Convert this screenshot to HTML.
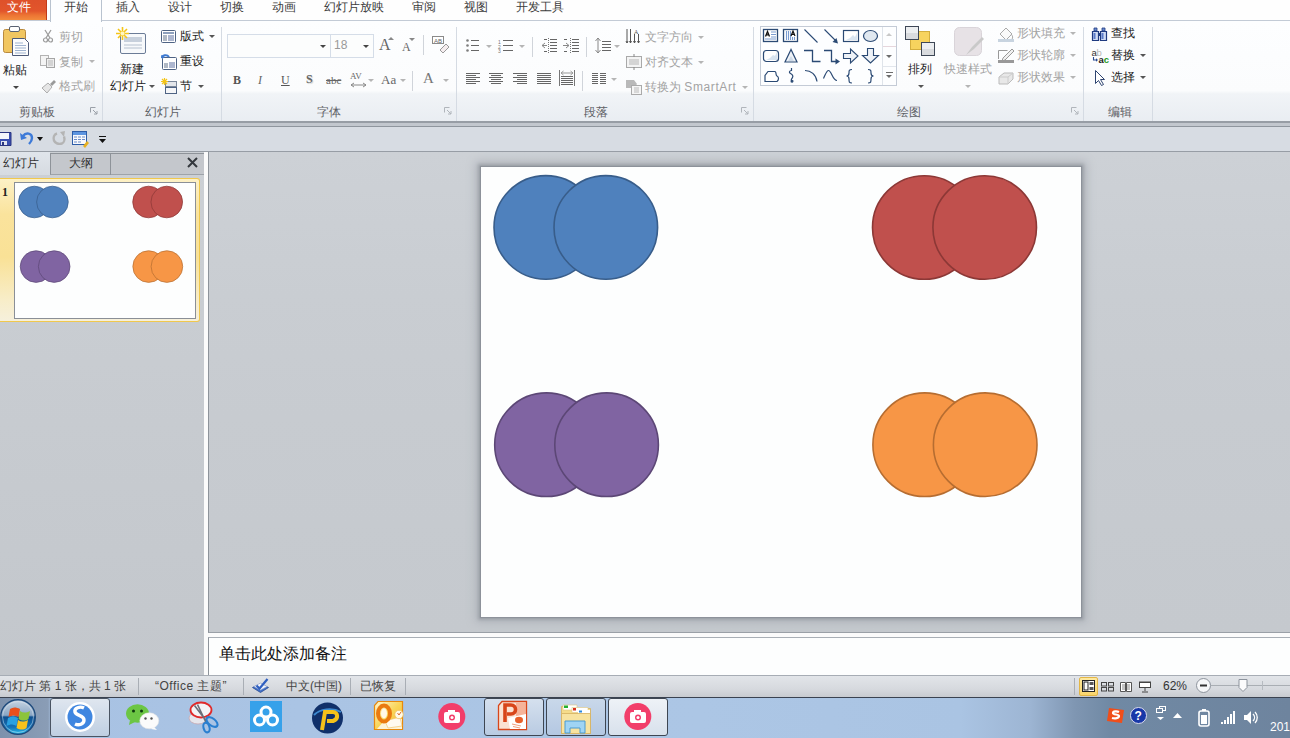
<!DOCTYPE html>
<html><head><meta charset="utf-8">
<style>
*{margin:0;padding:0;box-sizing:border-box}
html,body{width:1290px;height:738px;overflow:hidden;background:#c9cdd2;font-family:"Liberation Sans",sans-serif;font-size:12px;color:#333}
.a{position:absolute}
.t{position:absolute;font-size:12px;line-height:12px;white-space:nowrap;color:#3c3c3c}
.g{color:#a3a3a3}
.ar{position:absolute;width:0;height:0;border-left:3px solid transparent;border-right:3px solid transparent;border-top:3px solid #555}
.ag{border-top-color:#b5b5b5}
.sep{position:absolute;width:1px;background:#d5dbe3}
svg{position:absolute;overflow:visible}
#tabs{left:0;top:0;width:1290px;height:21px;background:#fefefe}
#ribbon{left:0;top:20px;width:1290px;height:102px;background:linear-gradient(#fdfeff 0%,#fbfcfd 69%,#f1f4f7 72%,#e9edf2 100%);border-top:1px solid #c3cbd6}
#ribedge{left:0;top:121px;width:1290px;height:6px;background:linear-gradient(#979da5 0,#979da5 2px,#c2c7ce 2px,#c2c7ce 5px,#8f969e 5px)}
#qat{left:0;top:127px;width:1290px;height:25px;background:#d7dce3;border-bottom:1px solid #979da5}
#left{left:0;top:152px;width:204px;height:523px;background:linear-gradient(#ccd0d5,#c8ccd1 40%,#c3c7cc)}
#split{left:204px;top:152px;width:4px;height:523px;background:#fbfbfb}
#work{left:208px;top:152px;width:1082px;height:481px;background:linear-gradient(#cdd1d6,#c9cdd2 30%,#c7cbd0 55%,#c5c9ce);border-left:1px solid #8e949b;border-bottom:1px solid #9aa0a7}
#slide{left:481px;top:167px;width:600px;height:450px;background:#fdfefe;box-shadow:0 0 1px 1px #8d929a,0 0 3px 3px #9fa4ab,0 0 9px 6px #b4b8be}
#notesplit{left:208px;top:633px;width:1082px;height:4px;background:#fbfbfb}
#notes{left:208px;top:637px;width:1082px;height:39px;background:#fdfefe;border-top:1px solid #a9afb6;border-left:1px solid #8e949b}
#status{left:0;top:675px;width:1290px;height:23px;background:linear-gradient(#e2e5e9,#d6d9de 60%,#c6c9ce);border-top:1px solid #a7adb5}
#taskbar{left:0;top:697px;width:1290px;height:41px;background:linear-gradient(90deg,#7d91ac 0,#8a9db6 48px,#a8c2e3 52px,#aac4e4 300px,#acc6e5 700px,#aac4e3 960px,#9db5d3 1030px,#7f96b2 1075px,#7089a4 1110px,#6e849e 1290px);border-top:1px solid #3a4250}
</style></head><body>
<div id="tabs" class="a"></div>
<div id="ribbon" class="a"></div>
<div id="ribedge" class="a"></div>
<div id="qat" class="a"></div>
<div id="left" class="a"></div>
<div id="split" class="a"></div>
<div id="work" class="a"></div>
<div id="slide" class="a"></div>
<div id="notesplit" class="a"></div>
<div id="notes" class="a"></div>
<div id="status" class="a"></div>
<div id="taskbar" class="a"></div>

<!-- ===== TABS ===== -->
<div class="a" style="left:0;top:0;width:47px;height:20px;background:linear-gradient(#de512a,#e2552b 55%,#ec7333 75%,#f38b3d);border-right:1px solid #c23a18"></div>
<div class="t" style="left:7px;top:1px;color:#fff">文件</div>
<div class="a" style="left:50px;top:-3px;width:52px;height:25px;background:#fdfeff;border:1px solid #b9c3cf;border-bottom:none;border-radius:3px 3px 0 0"></div>
<div class="t" style="left:64px;top:1px">开始</div>
<div class="t" style="left:116px;top:1px">插入</div>
<div class="t" style="left:168px;top:1px">设计</div>
<div class="t" style="left:220px;top:1px">切换</div>
<div class="t" style="left:272px;top:1px">动画</div>
<div class="t" style="left:324px;top:1px">幻灯片放映</div>
<div class="t" style="left:412px;top:1px">审阅</div>
<div class="t" style="left:464px;top:1px">视图</div>
<div class="t" style="left:516px;top:1px">开发工具</div>

<!-- ===== RIBBON GROUP SEPARATORS ===== -->
<div class="sep" style="left:102px;top:27px;height:94px"></div>
<div class="sep" style="left:221px;top:27px;height:94px"></div>
<div class="sep" style="left:456px;top:27px;height:94px"></div>
<div class="sep" style="left:753px;top:27px;height:94px"></div>
<div class="sep" style="left:1083px;top:27px;height:94px"></div>
<div class="sep" style="left:1152px;top:27px;height:94px"></div>

<!-- group labels -->
<div class="t" style="left:19px;top:106px;color:#5e6166">剪贴板</div>
<div class="t" style="left:145px;top:106px;color:#5e6166">幻灯片</div>
<div class="t" style="left:317px;top:106px;color:#5e6166">字体</div>
<div class="t" style="left:584px;top:106px;color:#5e6166">段落</div>
<div class="t" style="left:897px;top:106px;color:#5e6166">绘图</div>
<div class="t" style="left:1108px;top:106px;color:#5e6166">编辑</div>
<!-- launchers -->
<svg style="left:90px;top:107px" width="8" height="8"><path d="M0.5 0.5h5M0.5 0.5v5M3 3l4 4M7 4v3h-3" stroke="#9aa0a8" fill="none"/></svg>
<svg style="left:444px;top:107px" width="8" height="8"><path d="M0.5 0.5h5M0.5 0.5v5M3 3l4 4M7 4v3h-3" stroke="#b0b5bb" fill="none"/></svg>
<svg style="left:741px;top:107px" width="8" height="8"><path d="M0.5 0.5h5M0.5 0.5v5M3 3l4 4M7 4v3h-3" stroke="#b0b5bb" fill="none"/></svg>
<svg style="left:1071px;top:107px" width="8" height="8"><path d="M0.5 0.5h5M0.5 0.5v5M3 3l4 4M7 4v3h-3" stroke="#b0b5bb" fill="none"/></svg>

<!-- ===== CLIPBOARD ===== -->
<svg style="left:3px;top:26px" width="28" height="31">
 <rect x="0.5" y="3.5" width="22" height="23" rx="2" fill="#f1c661" stroke="#b98a3e"/>
 <rect x="6.5" y="0.5" width="10" height="5" rx="1.5" fill="#fff" stroke="#5a6272"/>
 <path d="M9.5 12.5h12l4 4v13h-16z" fill="#fdfdfd" stroke="#4d5a78"/>
 <path d="M12 17h8M12 19.5h11M12 22h11M12 24.5h11M12 27h11" stroke="#9fb3cf"/>
</svg>
<div class="t" style="left:3px;top:64px;color:#222">粘贴</div>
<div class="ar" style="left:13px;top:86px;border-top-color:#444"></div>
<svg style="left:43px;top:30px" width="10" height="13"><path d="M2 0l5 8M8 0l-5 8" stroke="#9c9c9c" stroke-width="1.3"/><circle cx="2.5" cy="10" r="2" fill="none" stroke="#9c9c9c" stroke-width="1.2"/><circle cx="7.5" cy="10" r="2" fill="none" stroke="#9c9c9c" stroke-width="1.2"/></svg>
<div class="t g" style="left:59px;top:31px">剪切</div>
<svg style="left:40px;top:55px" width="16" height="13"><rect x="0.5" y="0.5" width="8" height="10" fill="#f4f4f4" stroke="#b3b3b3"/><rect x="6.5" y="3.5" width="8" height="9" fill="#eee" stroke="#a5a5a5"/><path d="M8 6h5M8 8h5M8 10h5" stroke="#b8b8b8"/></svg>
<div class="t g" style="left:59px;top:56px">复制</div>
<div class="ar ag" style="left:89px;top:60px"></div>
<svg style="left:40px;top:79px" width="17" height="15"><path d="M2 9l6-5 4 4-5 6z" fill="#e6e6e6" stroke="#adadad"/><path d="M10 5l4-4 2 2-4 4z" fill="#9a9a9a"/></svg>
<div class="t g" style="left:59px;top:80px">格式刷</div>

<!-- ===== SLIDES ===== -->
<svg style="left:116px;top:27px" width="32" height="28">
 <rect x="4.5" y="6.5" width="25" height="20" rx="1.5" fill="#f7f9fb" stroke="#6b7c97"/>
 <rect x="8" y="10" width="18" height="5" fill="#c7d0dc"/>
 <path d="M8 18h18M8 21h18" stroke="#b6c1cf"/>
 <path d="M6.5 0v13M0 6.5h13M2 2l9 9M11 2l-9 9" stroke="#f5c518" stroke-width="1.6"/>
 <circle cx="6.5" cy="6.5" r="2" fill="#fff6c0"/>
</svg>
<div class="t" style="left:120px;top:63px;color:#222">新建</div>
<div class="t" style="left:110px;top:80px;color:#222">幻灯片</div>
<div class="ar" style="left:149px;top:85px"></div>
<svg style="left:161px;top:30px" width="16" height="13"><rect x="0.5" y="0.5" width="14" height="12" rx="1" fill="#fff" stroke="#4e6384"/><rect x="2" y="2" width="11" height="2" fill="#8ea0bd"/><rect x="2" y="5" width="4" height="6" fill="#b0b8c4"/><path d="M7 6h6M7 8h6M7 10h6" stroke="#5a6fa0"/></svg>
<div class="t" style="left:180px;top:30px;color:#222">版式</div>
<div class="ar" style="left:209px;top:35px"></div>
<svg style="left:161px;top:54px" width="17" height="16"><rect x="1.5" y="3.5" width="14" height="12" rx="1" fill="#fff" stroke="#4e6384"/><rect x="3" y="9" width="4" height="5" fill="#b0b8c4"/><path d="M8 9h6M8 11h6M8 13h6" stroke="#5a6fa0"/><path d="M1 4c0-3 5-4 7-1" stroke="#3b78d0" stroke-width="2" fill="none"/><path d="M0 1l1 4 3-2z" fill="#3b78d0"/></svg>
<div class="t" style="left:180px;top:55px;color:#222">重设</div>
<svg style="left:161px;top:78px" width="17" height="17"><rect x="4.5" y="3.5" width="11" height="5" fill="#e3e6ea" stroke="#7a879a"/><rect x="4.5" y="9.5" width="11" height="6" fill="#f5f6f8" stroke="#4e6384"/><path d="M3.5 0v7M0 3.5h7M1 1l5 5M6 1l-5 5" stroke="#f5c518" stroke-width="1.2"/></svg>
<div class="t" style="left:180px;top:80px;color:#222">节</div>
<div class="ar" style="left:198px;top:85px"></div>

<!-- ===== FONT ===== -->
<div class="a" style="left:227px;top:34px;width:104px;height:24px;background:#fcfdfd;border:1px solid #d5dde8"></div>
<div class="ar" style="left:320px;top:45px;border-top-color:#444"></div>
<div class="a" style="left:330px;top:34px;width:44px;height:24px;background:#fcfdfd;border:1px solid #d5dde8"></div>
<div class="t" style="left:334px;top:39px;color:#999;font-size:12px">18</div>
<div class="ar" style="left:363px;top:45px;border-top-color:#444"></div>
<div class="t" style="left:379px;top:37px;font-family:'Liberation Serif',serif;font-size:16px;line-height:16px;color:#666">A</div>
<div class="ar" style="left:388px;top:37px;border-top:none;border-bottom:3px solid #888"></div>
<div class="t" style="left:402px;top:41px;font-family:'Liberation Serif',serif;font-size:12px;line-height:12px;color:#666">A</div>
<div class="ar" style="left:409px;top:38px;border-top-color:#888"></div>
<div class="sep" style="left:423px;top:35px;height:20px;background:#d0d4da"></div>
<svg style="left:432px;top:36px" width="17" height="17"><rect x="0.5" y="0.5" width="11" height="7" fill="#fff" stroke="#8a8a8a"/><text x="2" y="7" font-size="6" fill="#666" font-family="Liberation Sans">AB</text><path d="M8 14l6-6 3 3-6 6z" fill="#f6eef0" stroke="#999"/></svg>
<div class="t" style="left:233px;top:74px;font-family:'Liberation Serif',serif;font-weight:bold;font-size:12px;color:#555">B</div>
<div class="t" style="left:258px;top:74px;font-family:'Liberation Serif',serif;font-style:italic;font-size:12px;color:#666">I</div>
<div class="t" style="left:281px;top:74px;font-family:'Liberation Serif',serif;font-size:12px;color:#555;text-decoration:underline">U</div>
<div class="t" style="left:306px;top:73px;font-family:'Liberation Serif',serif;font-weight:bold;font-size:12px;color:#666;text-shadow:1px 1px 1px #ccc">S</div>
<div class="t" style="left:326px;top:74px;font-family:'Liberation Serif',serif;font-size:11px;color:#666;text-decoration:line-through">abc</div>
<div class="t" style="left:350px;top:72px;font-family:'Liberation Serif',serif;font-size:9px;line-height:9px;color:#666">AV</div>
<svg style="left:350px;top:82px" width="17" height="6"><path d="M1 3h15M1 3l3-2M1 3l3 2M16 3l-3-2M16 3l-3 2" stroke="#888" fill="none"/></svg>
<div class="ar ag" style="left:368px;top:79px"></div>
<div class="t" style="left:381px;top:73px;font-family:'Liberation Serif',serif;font-size:13px;line-height:13px;color:#666">Aa</div>
<div class="ar ag" style="left:400px;top:79px"></div>
<div class="sep" style="left:412px;top:71px;height:20px;background:#d0d4da"></div>
<div class="t" style="left:423px;top:71px;font-family:'Liberation Serif',serif;font-size:15px;line-height:15px;color:#777">A</div>
<div class="ar ag" style="left:443px;top:79px"></div>

<!-- ===== PARAGRAPH ===== -->
<svg style="left:466px;top:39px" width="14" height="13"><g fill="#7d7d7d"><circle cx="1.5" cy="1.5" r="1.3"/><circle cx="1.5" cy="6.5" r="1.3"/><circle cx="1.5" cy="11.5" r="1.3"/></g><path d="M5 1.5h8M5 6.5h8M5 11.5h8" stroke="#666" stroke-width="1.1"/></svg>
<div class="ar ag" style="left:486px;top:45px"></div>
<svg style="left:498px;top:39px" width="16" height="14"><text x="0" y="5" font-size="5" fill="#777" font-family="Liberation Sans">1</text><text x="0" y="9.5" font-size="5" fill="#777" font-family="Liberation Sans">2</text><text x="0" y="14" font-size="5" fill="#777" font-family="Liberation Sans">3</text><path d="M5 1.5h10M5 6.5h10M5 11.5h10" stroke="#666" stroke-width="1.1"/></svg>
<div class="ar ag" style="left:519px;top:45px"></div>
<div class="sep" style="left:532px;top:37px;height:20px;background:#d0d4da"></div>
<svg style="left:541px;top:38px" width="17" height="16"><path d="M3 1.5h3M9 1.5h7M9 4.5h7M9 7.5h7M9 10.5h7M3 13.5h3M9 13.5h7" stroke="#666" stroke-width="1.2"/><path d="M7.5 0v16" stroke="#777" stroke-dasharray="1 1"/><path d="M6 7.5h-5M1 7.5l3-2.5M1 7.5l3 2.5" stroke="#888" fill="none"/></svg>
<svg style="left:563px;top:38px" width="17" height="16"><path d="M1 1.5h3M9 1.5h7M9 4.5h7M9 7.5h7M9 10.5h7M1 13.5h3M9 13.5h7" stroke="#666" stroke-width="1.2"/><path d="M7.5 0v16" stroke="#777" stroke-dasharray="1 1"/><path d="M0 7.5h6M6 7.5l-3-2.5M6 7.5l-3 2.5" stroke="#888" fill="none"/></svg>
<div class="sep" style="left:586px;top:37px;height:20px;background:#d0d4da"></div>
<svg style="left:595px;top:37px" width="17" height="17"><path d="M3 1v15M3 1l-2.5 3M3 1l2.5 3M3 16l-2.5-3M3 16l2.5-3" stroke="#888" fill="none"/><path d="M7 4.5h9M7 7.5h9M7 10.5h9M7 13.5h9" stroke="#666" stroke-width="1.1"/></svg>
<div class="ar ag" style="left:614px;top:45px"></div>

<svg style="left:466px;top:72px" width="15" height="13"><path d="M0 1.5H14M0 3.5H10M0 5.5H14M0 7.5H10M0 9.5H14M0 11.5H10" stroke="#666" stroke-width="1"/></svg>
<svg style="left:489px;top:72px" width="15" height="13"><path d="M0 1.5H14M2 3.5H12M0 5.5H14M2 7.5H12M0 9.5H14M2 11.5H12" stroke="#666" stroke-width="1"/></svg>
<svg style="left:513px;top:72px" width="15" height="13"><path d="M0 1.5H14M4 3.5H14M0 5.5H14M4 7.5H14M0 9.5H14M4 11.5H14" stroke="#666" stroke-width="1"/></svg>
<svg style="left:537px;top:72px" width="15" height="13"><path d="M0 1.5H14M0 3.5H14M0 5.5H14M0 7.5H14M0 9.5H14M0 11.5H14" stroke="#666" stroke-width="1"/></svg>
<svg style="left:559px;top:70px" width="17" height="17"><path d="M0.5 0v16M15.5 0v16" stroke="#777"/><path d="M2 3h12M2 3l2.5-2M2 3l2.5 2M14 3l-2.5-2M14 3l-2.5 2" stroke="#999" fill="none"/><path d="M2 6.5H14M2 8.5H14M2 10.5H14M2 12.5H14M2 14.5H14" stroke="#666" stroke-width="1"/></svg>
<div class="sep" style="left:582px;top:71px;height:20px;background:#d0d4da"></div>
<svg style="left:592px;top:72px" width="14" height="13"><path d="M0 1.5H6M8 1.5H14M0 3.5H6M8 3.5H14M0 5.5H6M8 5.5H14M0 7.5H6M8 7.5H14M0 9.5H6M8 9.5H14M0 11.5H6M8 11.5H14" stroke="#666" stroke-width="1"/></svg>
<div class="ar ag" style="left:611px;top:78px"></div>

<svg style="left:626px;top:29px" width="16" height="16"><path d="M1 0v14M4.5 0v14M8.5 5v9M12.5 5v9" stroke="#555"/><path d="M0 12l1 2 1-2M3.5 12l1 2 1-2M7.5 12l1 2 1-2M11.5 12l1 2 1-2" stroke="#555" fill="none"/><text x="8" y="5" font-size="6" fill="#555" font-family="Liberation Serif">A</text></svg>
<div class="t g" style="left:645px;top:31px">文字方向</div>
<div class="ar ag" style="left:698px;top:36px"></div>
<svg style="left:626px;top:54px" width="16" height="16"><rect x="0.5" y="2.5" width="15" height="11" fill="#f4f4f4" stroke="#a9a9a9"/><path d="M3 6h10M3 8h10M3 10h10" stroke="#b5b5b5"/><path d="M8 0v3M8 13v3" stroke="#888"/></svg>
<div class="t g" style="left:645px;top:56px">对齐文本</div>
<div class="ar ag" style="left:698px;top:61px"></div>
<svg style="left:626px;top:79px" width="17" height="16"><path d="M0 1h8l3 4-3 4H0z" fill="#b9b9b9"/><rect x="5.5" y="6.5" width="10" height="9" fill="#f5f5f5" stroke="#aaa"/><path d="M8 9h5M8 11h5M8 13h5" stroke="#bbb"/></svg>
<div class="t g" style="left:645px;top:81px">转换为 <span style="letter-spacing:0.6px">SmartArt</span></div>
<div class="ar ag" style="left:742px;top:86px"></div>

<!-- ===== DRAWING ===== -->
<div class="a" style="left:760px;top:26px;width:137px;height:60px;background:#fdfeff;border:1px solid #c4cbd6"></div>
<div class="a" style="left:882px;top:27px;width:14px;height:58px;border-left:1px solid #dfe4ea"></div>
<div class="a" style="left:883px;top:46px;width:13px;height:1px;background:#e6d6dc"></div>
<div class="a" style="left:883px;top:66px;width:13px;height:1px;background:#e2e6ec"></div>
<div class="ar" style="left:886px;top:33px;border-top:none;border-bottom:3px solid #c8c8c8"></div>
<div class="ar" style="left:886px;top:55px;border-top-color:#6c6c6c"></div>
<div class="a" style="left:886px;top:72px;width:7px;height:1px;background:#6c6c6c"></div>
<div class="ar" style="left:886px;top:75px;border-top-color:#6c6c6c"></div>
<svg style="left:762px;top:28px" width="120" height="56">
 <g fill="none" stroke="#2b4a74" stroke-width="1.1">
 <rect x="1.5" y="1.5" width="14" height="12" fill="#fff" stroke-width="1.3"/>
 <path d="M3.5 8.5l2-5 2 5M4.3 6.8h2.6" stroke="#111" stroke-width="1.3"/>
 <path d="M9 4h5M9 6.5h5M9 9h5M3 11h11" stroke="#7a9cd0"/>
 <rect x="21.5" y="1.5" width="14" height="12" fill="#fff" stroke-width="1.3"/>
 <path d="M24.5 3v9M26.5 3v9M28.5 3v9M30.5 9v3M32.5 9v3" stroke="#7a9cd0"/>
 <path d="M29 8l2-5 2 5M29.8 6.3h2.6" stroke="#111" stroke-width="1.2"/>
 <path d="M42.5 1.5l13 13"/>
 <path d="M62.5 1.5l12 12"/><path d="M76 15.5l-5.5-1.5 4-4z" fill="#2b4a74" stroke="none"/>
 <rect x="81.5" y="2.5" width="15" height="11" fill="#fff" stroke-width="1.2"/><path d="M84 12l4-2 3-3 2 2 2-4v7h-11z" fill="#d8e4f0" stroke="none"/>
 <ellipse cx="108.5" cy="8" rx="7" ry="5.5" fill="#e0e8f0" stroke-width="1.2"/>
 <rect x="1.5" y="22.5" width="15" height="11" rx="3" fill="#fff" stroke-width="1.2"/><path d="M4 32l4-2 3-3 2 1 2-4v8h-11z" fill="#d8e4f0" stroke="none"/>
 <path d="M29 21.5l-6 12.5h12z" fill="#eef2f7" stroke-width="1.2"/><path d="M26 33l3-5 3 5z" fill="#cfdbe8" stroke="none"/>
 <path d="M42 22.5h8.5v11h8" stroke-width="1.3"/>
 <path d="M62 22.5h7.5v11h5" stroke-width="1.3"/><path d="M78 33.5l-4.5-3v6z" fill="#2b4a74" stroke="none"/>
 <path d="M81.5 25.5h7v-4.5l7.5 7-7.5 7v-4.5h-7z" fill="#eef2f7" stroke-width="1.1"/>
 <path d="M104 20.5h6v7h5l-8 7.5-8-7.5h5z" transform="translate(1.5,0)" fill="#eef2f7" stroke-width="1.1"/>
 <path d="M6 43.5h7c2 1 0 3 2 4.5 2 1 2 4 0 5.5h-12v-6z" fill="#fff" stroke-width="1.2"/>
 <path d="M29.5 40v2.5c-2 0-3 2-1 3 2 1 3 2 2 4s-2 2-1 4 2-1 1-1-2 0-1 2" stroke-width="1.2"/>
 <path d="M43 42.5c6 0 11 4 12 11" stroke-width="1.2"/>
 <path d="M61.5 50.5c2-4 3-8 5-8 3 0 4 10 8.5 10" stroke-width="1.2"/>
 <path d="M90 41.5c-3 0-3 1-3 3.5 0 2-1 3-2.5 3 1.5 0 2.5 1 2.5 3 0 3 0 4 3 4" stroke-width="1.2"/>
 <path d="M106 41.5c3 0 3 1 3 3.5 0 2 1 3 2.5 3-1.5 0-2.5 1-2.5 3 0 3 0 4-3 4" stroke-width="1.2"/>
 </g>
</svg>
<svg style="left:905px;top:26px" width="31" height="31">
 <rect x="5.5" y="5.5" width="19" height="18" fill="#f7d35e" stroke="#d4ae3e"/>
 <rect x="0.5" y="0.5" width="13" height="13" fill="#d9dbde" stroke="#3e4756"/><rect x="1" y="1" width="12" height="6" fill="#eceef0"/>
 <rect x="16.5" y="16.5" width="13" height="13" fill="#d9dbde" stroke="#3e4756"/><rect x="17" y="17" width="12" height="6" fill="#eceef0"/>
</svg>
<div class="t" style="left:908px;top:63px;color:#222">排列</div>
<div class="ar" style="left:918px;top:85px"></div>
<svg style="left:954px;top:27px" width="31" height="30">
 <rect x="0.5" y="0.5" width="27" height="28" rx="5" fill="#e7e2e6" stroke="#d9d4d9"/>
 <path d="M12 28l6-8 10-10 2 2-10 10z" fill="#c9c9c9"/>
</svg>
<div class="t g" style="left:944px;top:63px">快速样式</div>
<div class="ar ag" style="left:965px;top:85px"></div>

<svg style="left:998px;top:26px" width="17" height="16"><path d="M2 8l6-6 6 6-6 6z" fill="#fafafa" stroke="#aaa"/><path d="M13 8c2 2 2 4 1 5" stroke="#aaa" fill="none"/><rect x="0" y="13" width="16" height="3" fill="#c8d4e0"/></svg>
<div class="t g" style="left:1017px;top:27px">形状填充</div>
<div class="ar ag" style="left:1070px;top:32px"></div>
<svg style="left:998px;top:48px" width="17" height="16"><path d="M0.5 11V2.5h9" stroke="#999" fill="none"/><path d="M5 10l9-9 2 2-9 9-3 1z" fill="#f0f0f0" stroke="#999"/><rect x="0" y="12" width="16" height="3" fill="#999"/></svg>
<div class="t g" style="left:1017px;top:49px">形状轮廓</div>
<div class="ar ag" style="left:1070px;top:54px"></div>
<svg style="left:998px;top:71px" width="17" height="15"><path d="M1 6l5-4h9v6l-5 5H1z" fill="#e8e8e8" stroke="#bbb"/><path d="M1 6h9v7M10 6l5-4" stroke="#ccc" fill="none"/></svg>
<div class="t g" style="left:1017px;top:71px">形状效果</div>
<div class="ar ag" style="left:1070px;top:76px"></div>

<!-- ===== EDITING ===== -->
<svg style="left:1092px;top:27px" width="16" height="14"><path d="M2 1h3v3H2zM10 1h3v3h-3z" fill="#6a8ad0" stroke="#1f3a80" stroke-width="0.8"/><path d="M0.5 4.5h6v9h-6zM8.5 4.5h6v9h-6z" fill="#d0dcf4" stroke="#1f3a80" stroke-width="1.2"/><path d="M1.5 6h2v6h-2zM9.5 6h2v6h-2z" fill="#5a7ac8"/><path d="M6.5 6h2v3h-2z" fill="#1f3a80"/></svg>
<div class="t" style="left:1111px;top:27px;color:#222">查找</div>
<svg style="left:1091px;top:47px" width="18" height="17"><text x="0.5" y="8.5" font-size="9.5" fill="#333" font-family="Liberation Sans">a</text><text x="5.5" y="8.5" font-size="9.5" fill="#b5b5b5" font-family="Liberation Sans">b</text><path d="M2.5 10v3h3.5" stroke="#2a4a90" stroke-width="1.1" fill="none"/><path d="M7 13l-2-1.8v3.6z" fill="#2a4a90"/><text x="7.5" y="16" font-size="9.5" font-weight="bold" fill="#222" font-family="Liberation Sans">a</text><text x="12.8" y="16" font-size="9.5" font-weight="bold" fill="#1a9a1a" font-family="Liberation Sans">c</text></svg>
<div class="t" style="left:1111px;top:49px;color:#222">替换</div>
<div class="ar" style="left:1140px;top:54px"></div>
<svg style="left:1095px;top:70px" width="11" height="16"><path d="M0.5 0.5v13l3-3 3 5 2-1-3-5h4z" fill="#fff" stroke="#2e4470"/></svg>
<div class="t" style="left:1111px;top:71px;color:#222">选择</div>
<div class="ar" style="left:1140px;top:76px"></div>

<!-- ===== QAT ===== -->
<svg style="left:0;top:132px" width="12" height="14"><path d="M-3 0.5h14v13H-3z" fill="#3a4fb0" stroke="#2a3580"/><rect x="-2" y="1" width="11" height="6" fill="#f4f6fb"/><rect x="1" y="9" width="6" height="4" fill="#dfe3ee"/><rect x="2" y="10" width="2" height="3" fill="#2a3580"/></svg>
<svg style="left:20px;top:131px" width="14" height="15"><path d="M3 5c3-4 9-3 9 2 0 3-2 5-3 6" stroke="#3d7ad8" stroke-width="2.4" fill="none"/><path d="M0 2l1 7 6-2z" fill="#3d7ad8"/></svg>
<div class="ar" style="left:37px;top:137px;border-left-width:3px;border-right-width:3px;border-top:4px solid #111"></div>
<svg style="left:52px;top:132px" width="14" height="14"><path d="M5 1.5c-3 1-4 4-3 7 1 3 5 4 8 3 2-1 3-4 2-7" stroke="#b4b4b4" stroke-width="2.4" fill="none"/><path d="M8 0l4 5 1-6z" fill="#b4b4b4"/></svg>
<svg style="left:72px;top:131px" width="18" height="17"><rect x="0.5" y="0.5" width="14" height="13" fill="#f8f9fc" stroke="#2f5ea8"/><rect x="1" y="1" width="13" height="3" fill="#5d95e0"/><path d="M2 6h3M6 6h3M10 6h3M2 8.5h3M6 8.5h3M10 8.5h3M2 11h3M6 11h3" stroke="#6a8cc8"/><path d="M11 15l4-5 2 2-4 5z" fill="#e6b020"/></svg>
<svg style="left:99px;top:136px" width="8" height="8"><path d="M0 0.5h7" stroke="#111"/><path d="M0 3h7l-3.5 4z" fill="#111"/></svg>

<!-- ===== LEFT PANEL ===== -->
<div class="a" style="left:0;top:152px;width:50px;height:23px;background:linear-gradient(#e0e5eb,#d6dbe1)"></div>
<div class="a" style="left:50px;top:153px;width:61px;height:22px;background:#c4c7cc;border:1px solid #8e9399;border-bottom:1px solid #9ea3a9"></div>
<div class="a" style="left:110px;top:153px;width:94px;height:22px;background:#c4c7cc;border-top:1px solid #8e9399;border-bottom:1px solid #9ea3a9"></div>
<div class="a" style="left:110px;top:153px;width:1px;height:22px;background:#8e9399"></div>
<div class="t" style="left:3px;top:157px;color:#333">幻灯片</div>
<div class="t" style="left:69px;top:157px;color:#333">大纲</div>
<svg style="left:187px;top:157px" width="11" height="11"><path d="M1 1l9 9M10 1l-9 9" stroke="#34383e" stroke-width="2"/></svg>
<div class="a" style="left:0;top:178px;width:200px;height:144px;background:linear-gradient(#fdf1c6,#fae39c 25%,#f9e196 55%,#f8edc8 85%,#f6f0dc);border:1px solid #f0c84e;border-left:none;border-radius:0 3px 3px 0"></div>
<div class="a" style="left:14px;top:182px;width:182px;height:137px;background:#fdfefe;border:1px solid #8a8f97"></div>
<div class="t" style="left:2px;top:186px;font-family:'Liberation Serif',serif;font-weight:bold;font-size:12px;color:#222">1</div>
<svg style="left:15px;top:183px" width="181" height="135">
 <g transform="scale(0.3017)" stroke-width="2.4">
 <circle cx="64.1" cy="63" r="52.4" fill="#4f81bd" stroke="#385d8a"/>
 <circle cx="124.1" cy="63" r="52.4" fill="#4f81bd" stroke="#385d8a"/>
 <circle cx="442.6" cy="63" r="52.4" fill="#c0504d" stroke="#8c3836"/>
 <circle cx="503" cy="63" r="52.4" fill="#c0504d" stroke="#8c3836"/>
 <circle cx="69.8" cy="277" r="52.4" fill="#8064a2" stroke="#5c4776"/>
 <circle cx="129.9" cy="277" r="52.4" fill="#8064a2" stroke="#5c4776"/>
 <circle cx="443" cy="277" r="52.4" fill="#f79646" stroke="#b66d31"/>
 <circle cx="503.5" cy="277" r="52.4" fill="#f79646" stroke="#b66d31"/>
 </g>
</svg>

<!-- ===== SLIDE SHAPES ===== -->
<svg style="left:481px;top:167px" width="600" height="450">
 <g stroke-width="1.6" transform="translate(0.7,0.7)">
 <circle cx="64.1" cy="59.7" r="51.8" fill="#4f81bd" stroke="#385d8a"/>
 <circle cx="124.1" cy="59.7" r="51.8" fill="#4f81bd" stroke="#385d8a"/>
 <circle cx="442.6" cy="59.8" r="51.8" fill="#c0504d" stroke="#8c3836"/>
 <circle cx="503" cy="59.8" r="51.8" fill="#c0504d" stroke="#8c3836"/>
 <circle cx="64.8" cy="277" r="51.8" fill="#8064a2" stroke="#5c4776"/>
 <circle cx="124.9" cy="277" r="51.8" fill="#8064a2" stroke="#5c4776"/>
 <circle cx="443" cy="277" r="51.8" fill="#f79646" stroke="#b66d31"/>
 <circle cx="503.5" cy="277" r="51.8" fill="#f79646" stroke="#b66d31"/>
 </g>
</svg>

<!-- ===== NOTES ===== -->
<div class="t" style="left:219px;top:646px;font-size:16px;line-height:16px;color:#111">单击此处添加备注</div>

<!-- ===== STATUS BAR ===== -->
<div class="t" style="left:0;top:680px;color:#444">幻灯片 第 1 张，共 1 张</div>
<div class="sep" style="left:138px;top:678px;height:17px;background:#a9aeb5"></div>
<div class="t" style="left:155px;top:680px;color:#444;letter-spacing:0.5px">“Office 主题”</div>
<div class="sep" style="left:243px;top:678px;height:17px;background:#a9aeb5"></div>
<svg style="left:252px;top:678px" width="17" height="16"><path d="M0.5 9.5l8 5 8-5-8-4z" fill="#3f6fc8" stroke="#2a4a90" stroke-width="0.8"/><path d="M2 8.5l6.5-3.5 6.5 3.5-6.5 3.5z" fill="#f4f7fc" stroke="#9aaad0" stroke-width="0.6"/><path d="M4.5 7.5l3 3 8-9.5" stroke="#2f5fc0" stroke-width="2.2" fill="none"/></svg>
<div class="t" style="left:286px;top:680px;color:#444">中文(中国)</div>
<div class="sep" style="left:350px;top:678px;height:17px;background:#a9aeb5"></div>
<div class="t" style="left:360px;top:680px;color:#444">已恢复</div>
<div class="sep" style="left:405px;top:678px;height:17px;background:#a9aeb5"></div>
<div class="sep" style="left:1074px;top:678px;height:17px;background:#a9aeb5"></div>
<div class="a" style="left:1079px;top:677px;width:19px;height:19px;background:linear-gradient(#fde9a0,#f9d56c);border:1px solid #e3b647;border-radius:2px"></div>
<svg style="left:1082px;top:680px" width="13" height="12"><rect x="0.5" y="0.5" width="12" height="11" fill="#fff" stroke="#222"/><rect x="2" y="2" width="4" height="8" fill="#fff" stroke="#222"/><rect x="7.5" y="2" width="4" height="3" fill="#555"/><rect x="7.5" y="7" width="4" height="3" fill="#555"/></svg>
<svg style="left:1101px;top:682px" width="13" height="10"><rect x="0.5" y="0.5" width="5" height="3.5" fill="none" stroke="#444"/><rect x="7.5" y="0.5" width="5" height="3.5" fill="none" stroke="#444"/><rect x="0.5" y="5.5" width="5" height="3.5" fill="none" stroke="#444"/><rect x="7.5" y="5.5" width="5" height="3.5" fill="none" stroke="#444"/></svg>
<svg style="left:1120px;top:681px" width="12" height="12"><path d="M0.5 1.5h5v9h-5zM6.5 1.5h5v9h-5z" fill="#fff" stroke="#555"/><path d="M2 4h3M2 6h3M2 8h3M7 4h3M7 6h3M7 8h3" stroke="#888"/></svg>
<svg style="left:1139px;top:681px" width="12" height="12"><rect x="0.5" y="1.5" width="11" height="5" fill="#fff" stroke="#444"/><path d="M6 7v3M3 11h6M0 1h12" stroke="#444"/></svg>
<div class="t" style="left:1163px;top:680px;color:#333">62%</div>
<svg style="left:1196px;top:678px" width="94" height="16"><circle cx="7.5" cy="7.5" r="7" fill="#f6f7f9" stroke="#8c939c"/><path d="M4 7.5h7" stroke="#333" stroke-width="2"/><path d="M15 7.5h79" stroke="#a9aeb4"/><path d="M66.5 3v9" stroke="#b6bbc1"/><path d="M43 1.5h8v8l-4 4-4-4z" fill="#fbfbfc" stroke="#8c939c"/></svg>

<!-- ===== TASKBAR ===== -->
<svg style="left:0;top:697px" width="40" height="41">
 <defs>
  <linearGradient id="orbg" x1="0" y1="0" x2="0" y2="1"><stop offset="0" stop-color="#c9d6e3"/><stop offset="0.45" stop-color="#8aa6c4"/><stop offset="0.5" stop-color="#0f4f8f"/><stop offset="0.8" stop-color="#1574b8"/><stop offset="1" stop-color="#25c4f0"/></linearGradient>
 </defs>
 <circle cx="18" cy="20" r="17.3" fill="url(#orbg)" stroke="#1e4a7c" stroke-width="1.4"/>
 <circle cx="18" cy="20" r="15.5" fill="none" stroke="#dfe8f2" stroke-width="0.8" opacity="0.6"/>
 <path d="M10 12c3-2 6-2 10 0l-1.5 8c-3-2-6-2-10 0z" fill="#e8501c"/>
 <path d="M20 14c3 2 6 2 10 0l-1.5 8c-3 2-6 2-10 0z" fill="#8cc43c"/>
 <path d="M8 21c3-2 6-2 10 0l-1.5 8c-3-2-6-2-10 0z" fill="#2aa0e0"/>
 <path d="M18 23c3 2 6 2 10 0l-1.5 8c-3 2-6 2-10 0z" fill="#f8c21c"/>
</svg>
<div class="a" style="left:50px;top:698px;width:60px;height:39px;border:1px solid #4a5462;border-radius:3px;background:linear-gradient(#dfe6ef,#bfcfe2)"></div>
<svg style="left:64px;top:701px" width="32" height="32"><circle cx="16" cy="16" r="15" fill="#fff"/><circle cx="16" cy="16" r="12.5" fill="#3f86e0"/><path d="M20 7c-4-2-10 0-9 4 1 4 9 3 9 8 0 4-5 6-9 4" stroke="#fff" stroke-width="3.4" fill="none"/></svg>
<svg style="left:126px;top:704px" width="34" height="27"><ellipse cx="11.5" cy="9.5" rx="11.5" ry="9.3" fill="#6cc644"/><path d="M4 16l-1 5 6-3z" fill="#6cc644"/><circle cx="7.5" cy="7" r="1.5" fill="#0f3a0f"/><circle cx="15.5" cy="7" r="1.5" fill="#0f3a0f"/><ellipse cx="23.3" cy="16.8" rx="9.5" ry="8" fill="#fbfbfb" stroke="#e4e4e4" stroke-width="0.6"/><path d="M28 23l3 3-6-1z" fill="#fbfbfb"/><circle cx="19.5" cy="14.5" r="1.2" fill="#555"/><circle cx="25.5" cy="14.5" r="1.2" fill="#555"/></svg>
<svg style="left:188px;top:701px" width="34" height="33"><ellipse cx="10" cy="17" rx="9" ry="6" fill="#e6e6ec" stroke="#c9a8b0" stroke-width="0.8"/><ellipse cx="13" cy="9" rx="10.5" ry="7.5" fill="#f4f4f6" stroke="#e02a2a" stroke-width="1.8"/><path d="M6.5 4.5l13 17M9.5 3.5l9 19" stroke="#6a6e78" stroke-width="1.6"/><ellipse cx="24" cy="21" rx="6.5" ry="3.5" transform="rotate(38 24 21)" fill="none" stroke="#2a7fd0" stroke-width="2.1"/><ellipse cx="18.5" cy="26.5" rx="3" ry="5" transform="rotate(-15 18.5 26.5)" fill="none" stroke="#2a7fd0" stroke-width="2.1"/></svg>
<svg style="left:250px;top:701px" width="33" height="32"><rect x="0" y="0" width="32" height="31" fill="#36a1ea"/><circle cx="16" cy="11" r="5" fill="none" stroke="#fff" stroke-width="3"/><circle cx="9.5" cy="19" r="5" fill="none" stroke="#fff" stroke-width="3"/><circle cx="22.5" cy="19" r="5" fill="none" stroke="#fff" stroke-width="3"/></svg>
<svg style="left:311px;top:702px" width="34" height="33"><circle cx="16.5" cy="16" r="15.5" fill="#10306a"/><path d="M3 13c6-6 18-8 27-3" stroke="#3d8ad0" stroke-width="2" fill="none"/><path d="M11 28l3-18h8c5 0 6 7 0 9h-6" stroke="#f5c21a" stroke-width="4" fill="none"/></svg>
<svg style="left:374px;top:701px" width="31" height="30"><defs><linearGradient id="olg" x1="0" y1="0" x2="1" y2="1"><stop offset="0" stop-color="#fff6d0"/><stop offset="0.5" stop-color="#f9d558"/><stop offset="1" stop-color="#f2b630"/></linearGradient></defs><path d="M4 0.5h24.5v28h-28v-24z" fill="url(#olg)" stroke="#e8890c" stroke-width="1.2"/><path d="M3 28l8-9 17-1v10z" fill="#fdf3d8"/><path d="M11 20l15-4 2 9-14 2z" fill="#fffaf0" stroke="#f0c060" stroke-width="0.6"/><ellipse cx="10" cy="12.5" rx="6" ry="8" fill="none" stroke="#ea7a10" stroke-width="4"/><ellipse cx="10" cy="12.5" rx="3" ry="5" fill="#fff8e8"/><circle cx="25" cy="13.5" r="4.2" fill="#fffbe8" stroke="#f0c060" stroke-width="0.8"/><path d="M23.5 12l1.5 2 2-3" stroke="#d85a1a" stroke-width="0.9" fill="none"/></svg>
<svg style="left:438px;top:703px" width="28" height="28"><circle cx="13.8" cy="13.5" r="13.5" fill="#f23e6a"/><rect x="6" y="9" width="16" height="11" rx="2" fill="#fff"/><rect x="10" y="7" width="7" height="3" fill="#fff"/><circle cx="14" cy="14.5" r="3" fill="#f23e6a"/><circle cx="14" cy="14.5" r="1.5" fill="#fff"/></svg>
<div class="a" style="left:484px;top:698px;width:60px;height:38px;border:1px solid #3e4652;border-radius:3px;background:linear-gradient(#d5e0ee,#b9cbe2)"></div>
<svg style="left:498px;top:701px" width="31" height="30"><path d="M4 0.5h24.5v28h-28v-24z" fill="#fbe2d2" stroke="#d8461a" stroke-width="1.3"/><path d="M18 2h10v14h-10z" fill="#f4a080" opacity="0.7"/><path d="M7 21V4h6c6 0 6 9 0 9H9" stroke="#d8461a" stroke-width="3.6" fill="none"/><path d="M10 17l18-4v15H12z" fill="#fff"/><ellipse cx="21" cy="19" rx="4" ry="3.2" fill="#e8602a"/><path d="M14 23l9 2M15 25.5l7 1.5" stroke="#f0a080"/></svg>
<div class="a" style="left:546px;top:698px;width:60px;height:38px;border:1px solid #3e4652;border-radius:3px;background:linear-gradient(#c9d8ea,#b4c8e2)"></div>
<svg style="left:560px;top:703px" width="33" height="31"><path d="M1.5 3.5h14l2 2h13v25h-29z" fill="#f6dc8a" stroke="#d4b060" stroke-width="0.8"/><path d="M3 2h14v5H3z" fill="#fff" stroke="#e0c880" stroke-width="0.6"/><rect x="4" y="2.5" width="4" height="2.5" fill="#22b030"/><path d="M12 4.5h16v5H12z" fill="#fff" stroke="#e0c880" stroke-width="0.6"/><rect x="13" y="5" width="3" height="2.5" fill="#d83020"/><path d="M18 7h12v4H18z" fill="#fff"/><rect x="19" y="7.5" width="3" height="2" fill="#2a88e0"/><path d="M1.5 10.5h29v20h-29z" fill="#f8e3a0" stroke="#d4b060" stroke-width="0.8"/><path d="M5 30v-12h20v12h-5v-5h-10v5z" fill="#9fd4f4" stroke="#4a9ad0" stroke-width="1"/></svg>
<div class="a" style="left:608px;top:698px;width:60px;height:38px;border:1px solid #3e4652;border-radius:3px;background:linear-gradient(#eef2f7,#d8e1ec)"></div>
<svg style="left:624px;top:703px" width="28" height="28"><circle cx="13.8" cy="13.5" r="13.5" fill="#f23e6a"/><rect x="6" y="9" width="16" height="11" rx="2" fill="#fff"/><rect x="10" y="7" width="7" height="3" fill="#fff"/><circle cx="14" cy="14.5" r="3" fill="#f23e6a"/><circle cx="14" cy="14.5" r="1.5" fill="#fff"/></svg>
<!-- tray -->
<svg style="left:1107px;top:707px" width="18" height="17"><path d="M2 1l15 2-2 13-15-2z" fill="#f04e1a"/><path d="M12 5c-2-1-6-1-6 1s6 1 6 3-4 3-7 2" stroke="#fff" stroke-width="2.2" fill="none"/></svg>
<svg style="left:1130px;top:707px" width="17" height="17"><circle cx="8.5" cy="8.5" r="8" fill="#1838a8" stroke="#dde"/><text x="4.5" y="13" font-size="12" font-weight="bold" fill="#fff" font-family="Liberation Sans">?</text></svg>
<svg style="left:1156px;top:706px" width="10" height="18"><rect x="3.5" y="0.5" width="6" height="4" fill="none" stroke="#fff"/><rect x="0.5" y="2.5" width="6" height="4" fill="#6f859f" stroke="#fff"/><path d="M1 11h7l-3.5 3z" fill="#fff"/></svg>
<svg style="left:1173px;top:713px" width="10" height="6"><path d="M0 5h9L4.5 0z" fill="#fff"/></svg>
<svg style="left:1198px;top:709px" width="12" height="18"><rect x="1" y="2" width="10" height="15" rx="2" fill="none" stroke="#fff" stroke-width="1.6"/><rect x="4" y="0" width="4" height="2" fill="#fff"/><rect x="3" y="6" width="6" height="9" fill="#fff"/></svg>
<svg style="left:1220px;top:711px" width="16" height="14"><path d="M1 13h2v-2H1zM4 13h2V9H4zM7 13h2V6H7zM10 13h2V3h-2zM13 13h2V0h-2z" fill="#fff"/></svg>
<svg style="left:1243px;top:709px" width="16" height="17"><path d="M1 6h3l4-4v13l-4-4H1z" fill="#fff"/><path d="M10 5c2 2 2 5 0 7M12 3c3 3 3 8 0 11" stroke="#fff" fill="none" stroke-width="1.3"/></svg>
<div class="t" style="left:1270px;top:721px;color:#fff;font-size:12px">201</div>
</body></html>
